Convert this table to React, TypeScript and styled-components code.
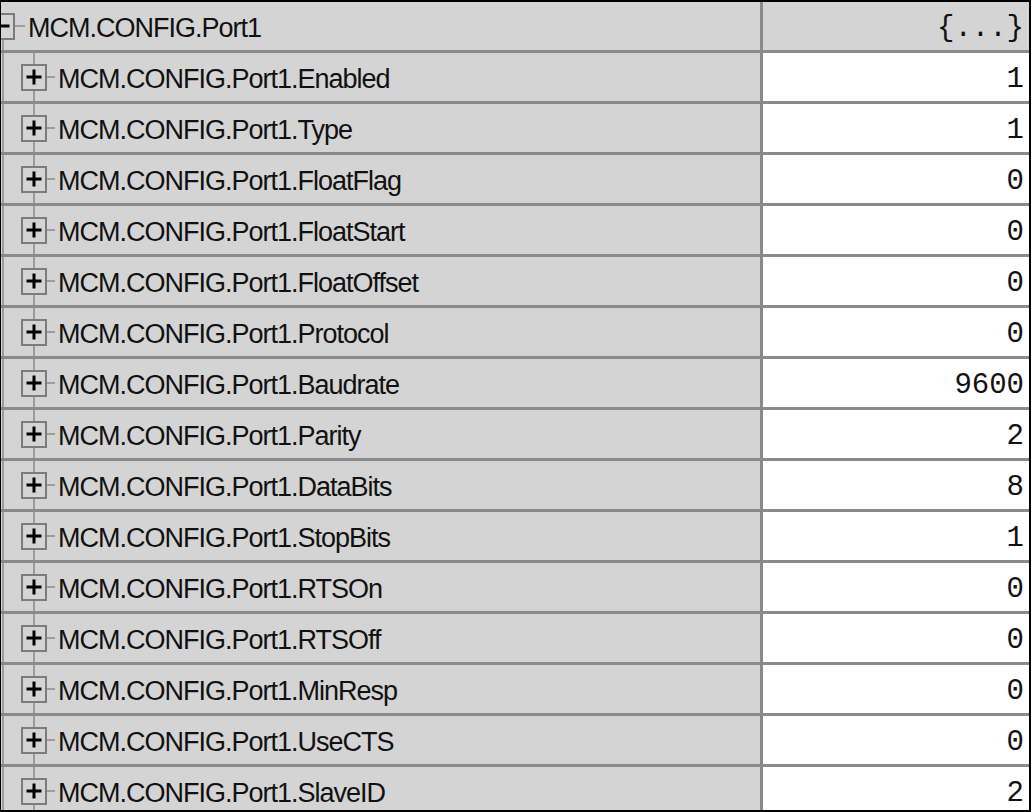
import React from "react";
import styled, {createGlobalStyle} from "styled-components";

const GRID = "#8a8a8a";
const TREE = "#9c9c9c";
const FACE = "#d4d4d4";

const ROWS: [string, string][] = [
	["Enabled", "1"],
	["Type", "1"],
	["FloatFlag", "0"],
	["FloatStart", "0"],
	["FloatOffset", "0"],
	["Protocol", "0"],
	["Baudrate", "9600"],
	["Parity", "2"],
	["DataBits", "8"],
	["StopBits", "1"],
	["RTSOn", "0"],
	["RTSOff", "0"],
	["MinResp", "0"],
	["UseCTS", "0"],
	["SlaveID", "2"],
];

const Global = createGlobalStyle`
  html, body {
    margin: 0;
    padding: 0;
    background: #fff;
  }
`

function App() {
	return <Frame>
		<Global/>
		<Row>
			<NameCell>
				<Rail $w={14} $x={1} $from={35}>
					<Expander $open $shift={-12}/>
				</Rail>
				<Connector $w={10}/>
				<Label>MCM.CONFIG.Port1</Label>
			</NameCell>
			<ValueCell $header><Value>{"{...}"}</Value></ValueCell>
		</Row>
		{ROWS.map(([name, value]) => (
			<Row key={name}>
				<NameCell>
					<Rail $w={20} $x={1} $from={0}/>
					<Rail $w={26} $x={12} $from={0}>
						<Expander/>
					</Rail>
					<Connector $w={8}/>
					<Label>MCM.CONFIG.Port1.{name}</Label>
				</NameCell>
				<ValueCell><Value>{value}</Value></ValueCell>
			</Row>
		))}
	</Frame>
}

const Frame = styled.div`
  width: 1031px;
  height: 812px;
  box-sizing: border-box;
  overflow: hidden;
  border-style: solid;
  border-color: #000;
  border-width: 2px 2px 2px 1px;
  background: ${FACE};
`

const Row = styled.div`
  display: grid;
  grid-template-columns: 762px 1fr;
  height: 48px;
  border-bottom: 3px solid ${GRID};
`

const NameCell = styled.div`
  display: flex;
  align-items: center;
  overflow: hidden;
  background: ${FACE};
  border-right: 3px solid ${GRID};
`

const ValueCell = styled.div<{ $header?: boolean }>`
  display: flex;
  align-items: center;
  justify-content: flex-end;
  padding-right: 5px;
  background: ${p => p.$header ? FACE : "#fff"};
`

const Rail = styled.div<{ $w: number, $x: number, $from: number }>`
  flex: none;
  align-self: stretch;
  width: ${p => p.$w}px;
  display: flex;
  align-items: center;
  background: linear-gradient(${TREE}, ${TREE}) no-repeat ${p => p.$x}px ${p => p.$from}px / 2px 100%;
`

const Expander = styled.span<{ $open?: boolean, $shift?: number }>`
  flex: none;
  position: relative;
  box-sizing: border-box;
  width: 26px;
  height: 27px;
  margin-left: ${p => p.$shift || 0}px;
  border: 2px solid #7c7c7c;
  background: ${FACE};

  &::before, &::after {
    content: "";
    position: absolute;
    background: #000;
    left: 50%;
    top: 50%;
    transform: translate(-50%, -50%);
  }
  &::before {
    width: 15px;
    height: 3px;
  }
  &::after {
    width: 3px;
    height: 15px;
    display: ${p => p.$open ? "none" : "block"};
  }
`

const Connector = styled.span<{ $w: number }>`
  flex: none;
  width: ${p => p.$w}px;
  height: 2px;
  background: ${TREE};
`

const Label = styled.span`
  padding: 4px 0 0 3px;
  font-family: "Liberation Sans", Arial, sans-serif;
  font-size: 27px;
  letter-spacing: -1px;
  color: #111;
  white-space: nowrap;
`

const Value = styled.span`
  padding-top: 4px;
  font-family: "Liberation Mono", "Courier New", monospace;
  font-size: 29px;
  color: #111;
  white-space: nowrap;
`

export default App
